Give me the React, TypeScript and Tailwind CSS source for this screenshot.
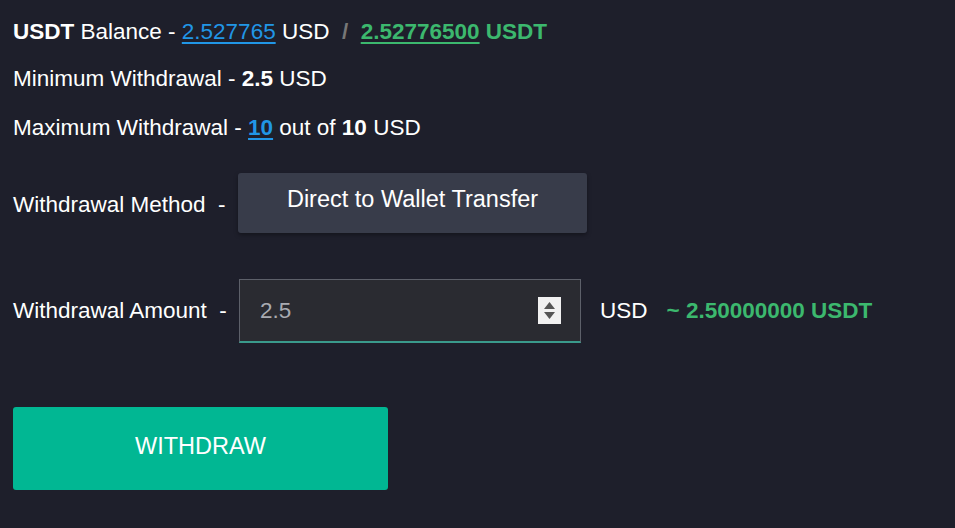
import React from 'react'

const font = { fontFamily: '"Liberation Sans", Arial, sans-serif' }

function Spinner() {
  return (
    <div className="absolute right-[20px] top-[18px] w-[23px] h-[27px] bg-[#f1f1f1] flex flex-col items-center justify-center gap-[3px]">
      <svg width="11" height="7" viewBox="0 0 11 7">
        <path d="M5.5 0 L11 7 L0 7 Z" fill="#555" />
      </svg>
      <svg width="11" height="7" viewBox="0 0 11 7">
        <path d="M0 0 L11 0 L5.5 7 Z" fill="#555" />
      </svg>
    </div>
  )
}

export default function App() {
  return (
    <div className="min-h-screen w-full bg-[#1e1f2b] text-white text-[22.5px] pl-[13px] pt-[17px]" style={font}>
      <div className="flex flex-col">
        {/* Balance lines */}
        <div className="h-[30px] flex items-center whitespace-pre">
          <span className="font-bold">USDT</span>
          <span> Balance - </span>
          <span className="text-[#2196e6] underline underline-offset-[3px]">2.527765</span>
          <span> USD </span>
          <span className="text-[#777] font-bold"> /  </span>
          <span className="text-[#3cb86e] font-bold underline underline-offset-[3px]">2.52776500</span>
          <span className="text-[#3cb86e] font-bold"> USDT</span>
        </div>
        <div className="h-[30px] mt-[17px] flex items-center whitespace-pre">
          <span>Minimum Withdrawal - </span>
          <span className="font-bold">2.5</span>
          <span> USD</span>
        </div>
        <div className="h-[30px] mt-[19px] flex items-center whitespace-pre">
          <span>Maximum Withdrawal - </span>
          <span className="text-[#2196e6] font-bold underline underline-offset-[3px]">10</span>
          <span> out of </span>
          <span className="font-bold">10</span>
          <span> USD</span>
        </div>

        {/* Method */}
        <div className="h-[60px] mt-[30px] flex items-center">
          <span className="w-[225px] shrink-0 whitespace-pre pt-[4px]">Withdrawal Method  -</span>
          <button className="w-[349px] h-[60px] bg-[#383c4a] rounded-[3px] shadow-[0_2px_4px_rgba(0,0,0,0.35)] text-white text-[23.5px] pb-[7px]" style={font}>
            Direct to Wallet Transfer
          </button>
        </div>

        {/* Amount */}
        <div className="h-[64px] mt-[46px] flex items-center">
          <span className="w-[226px] shrink-0 whitespace-pre">Withdrawal Amount  -</span>
          <div className="relative w-[342px] h-[64px]">
            <input
              type="text"
              defaultValue="2.5"
              className="w-full h-full bg-[#2a2b31] border border-[#5d606a] border-b-2 border-b-[#3a9a8c] pl-[20px] text-[22.5px] text-[#a9abb1] outline-none"
              style={font}
            />
            <Spinner />
          </div>
          <span className="ml-[19px]">USD</span>
          <span className="ml-[19px] text-[#3cb86e] font-bold">~ 2.50000000 USDT</span>
        </div>

        {/* Withdraw */}
        <button className="mt-[64px] w-[375px] h-[83px] bg-[#01b793] rounded-[3px] text-white text-[23.5px] pb-[4px]" style={font}>
          WITHDRAW
        </button>
      </div>
    </div>
  )
}
